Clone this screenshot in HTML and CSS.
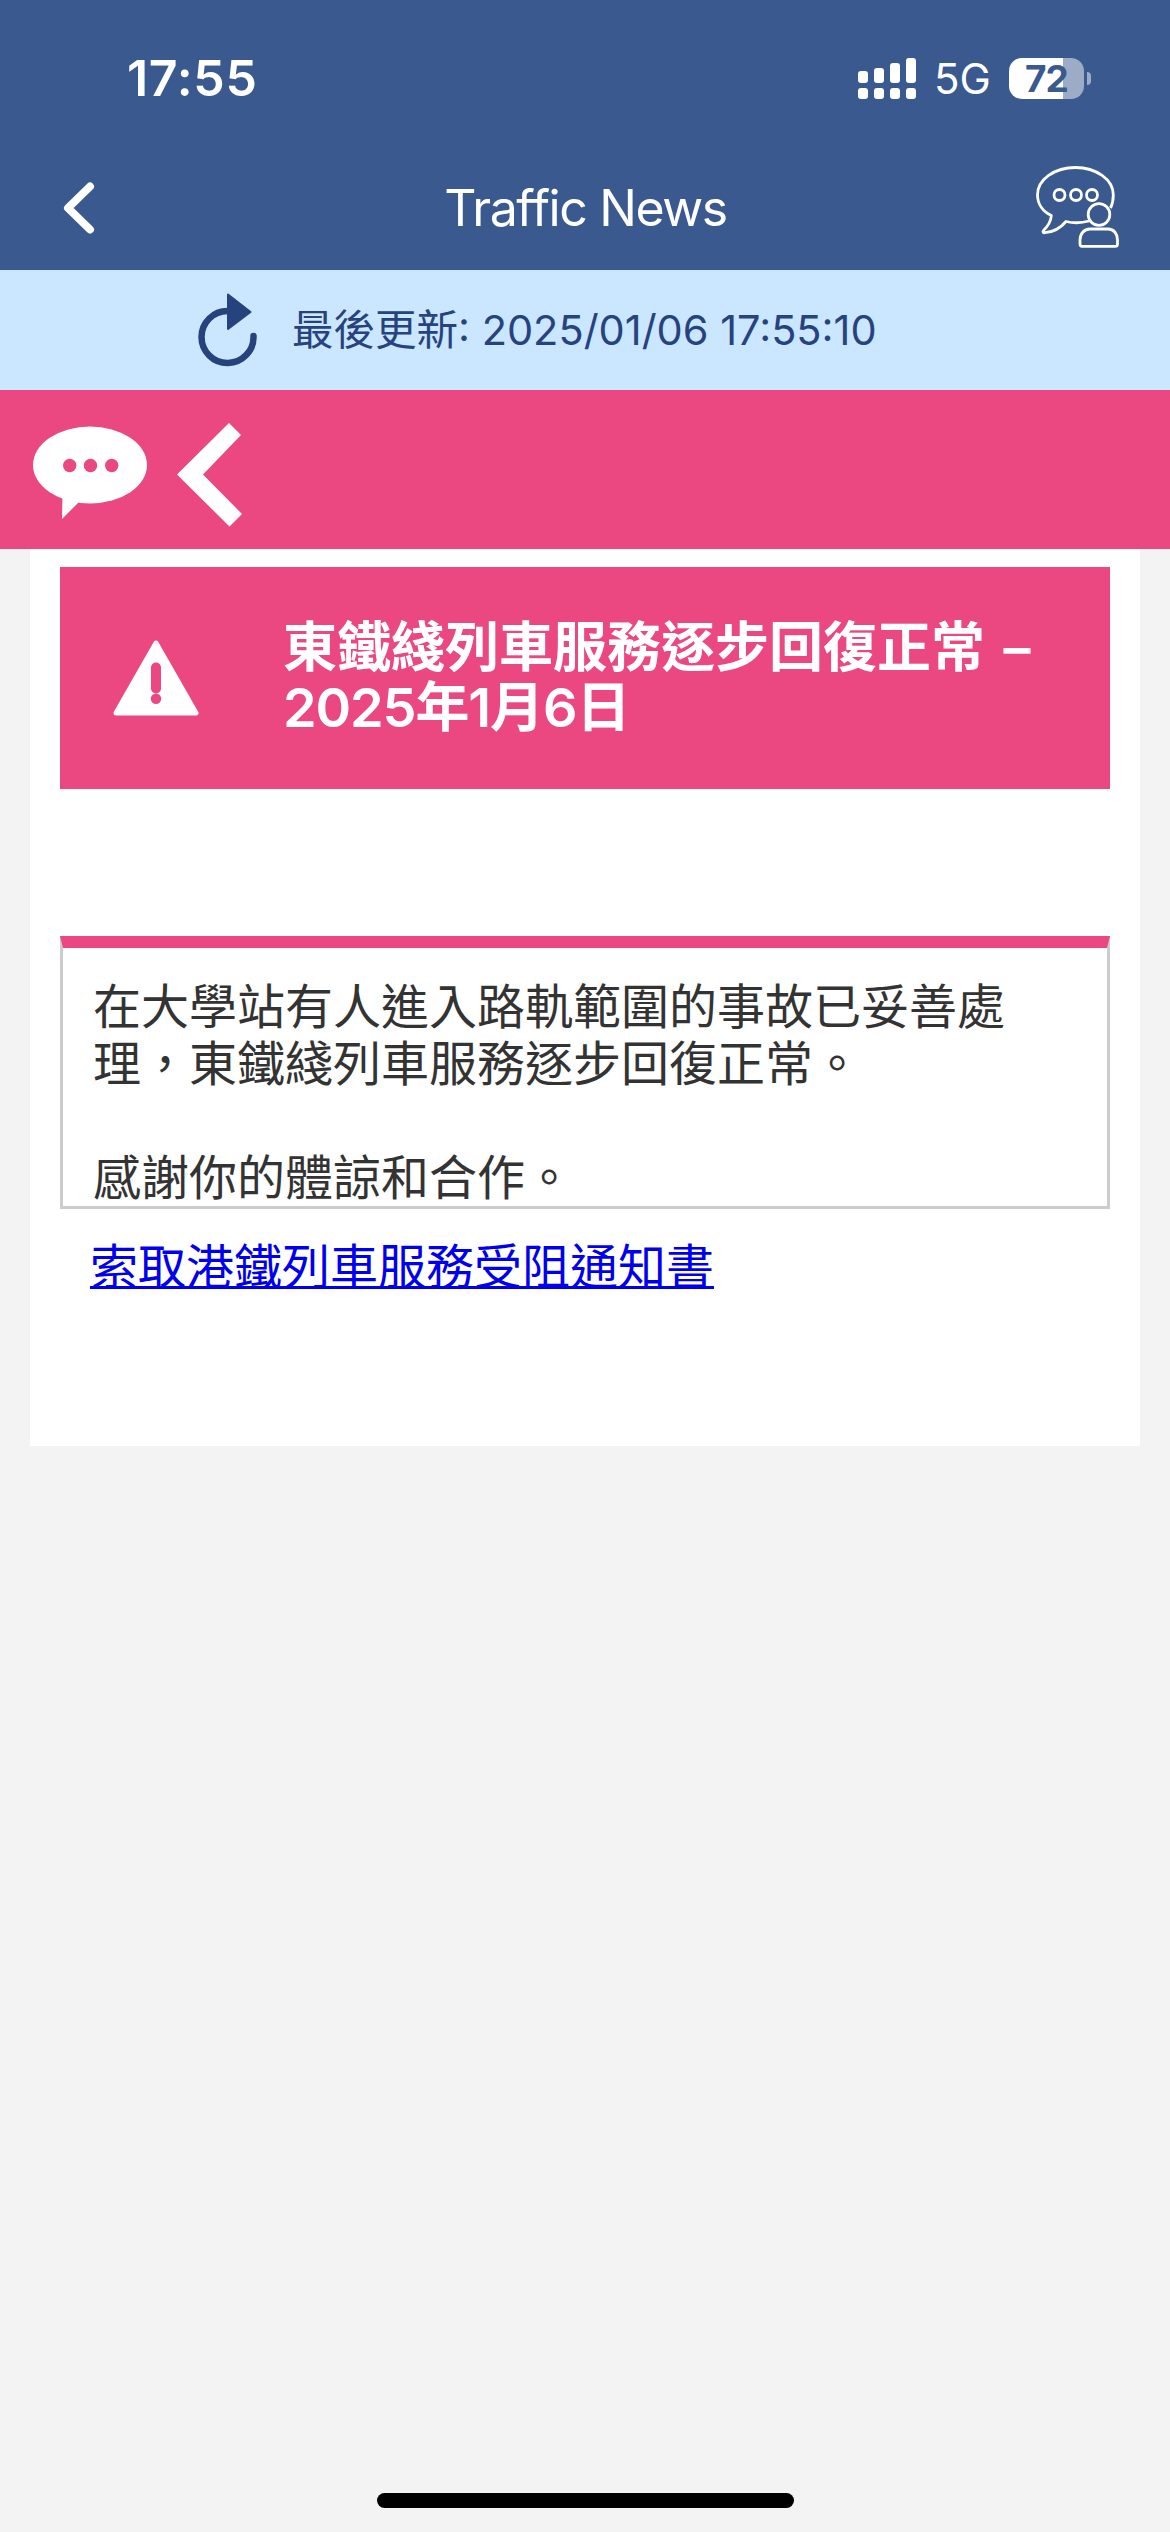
FILE: index.html
```html
<!DOCTYPE html>
<html lang="zh-Hant">
<head>
    <meta charset="utf-8">
    <title>Traffic News</title>
    <meta name="viewport" content="width=device-width, initial-scale=1.0">
    <link rel="stylesheet" href="styles.css">
</head>
<body>
    <header class="header">
        <div class="status-bar">
            <div class="time">17:55</div>
            <div class="status-icons">
                <svg class="signal" viewBox="0 0 58 41" fill="#fff">
                    <rect x="0" y="13" width="10" height="12" rx="3"/>
                    <rect x="16" y="10" width="10" height="15" rx="3"/>
                    <rect x="32" y="5" width="10" height="20" rx="3"/>
                    <rect x="48" y="0" width="10" height="25" rx="3"/>
                    <rect x="0" y="30" width="10" height="11" rx="3"/>
                    <rect x="16" y="30" width="10" height="11" rx="3"/>
                    <rect x="32" y="30" width="10" height="11" rx="3"/>
                    <rect x="48" y="30" width="10" height="11" rx="3"/>
                </svg>
                <span class="network">5G</span>
                <div class="battery"><span class="battery-text">72</span></div>
                <div class="battery-tip"></div>
            </div>
        </div>
        <div class="nav-bar">
            <svg class="back" viewBox="0 0 32 54" fill="none" stroke="#fff" stroke-width="8" stroke-linecap="round" stroke-linejoin="round">
                <path d="M27 5.500L5 27L27 48.500"/>
            </svg>
            <h1 class="title">Traffic News</h1>
            <svg class="chat" viewBox="0 0 84 84" fill="none" stroke="#fff" stroke-width="2.800" stroke-linejoin="round">
                <path d="M75.500 44C77.500 40 78.300 35.500 78.300 31C78.300 15.500 61 3.500 40.500 3.500C19.500 3.500 2.500 15.500 2.500 31C2.500 40 8 47.500 16.300 51.500C16 57.500 12.500 62.500 8.500 66.500C7.300 68 8.500 69 10 68.700C18 68 26 63.500 31 57.500C38.500 59.300 47 59 54 57"/>
                <circle cx="24.500" cy="31" r="5.500"/>
                <circle cx="41" cy="31" r="5.500"/>
                <circle cx="57" cy="31" r="5.500"/>
                <circle cx="64" cy="50.500" r="10.800"/>
                <path d="M55 65H73C79 65 82.500 70 82.500 76V80Q82.500 82.300 80.500 82.300H47Q45 82.300 45 80V76C45 70 49 65 55 65Z"/>
            </svg>
        </div>
    </header>

    <div class="update-bar">
        <svg class="refresh" viewBox="0 0 60 76">
            <path d="M30 18A26 26 0 1 0 55.500 43" fill="none" stroke="#27437e" stroke-width="6.500" stroke-linecap="round"/>
            <path d="M30 1.500L52.500 19L30 36Z" fill="#27437e" stroke="#27437e" stroke-width="2" stroke-linejoin="round"/>
        </svg>
        <span class="update-text">最後更新: 2025/01/06 17:55:10</span>
    </div>

    <div class="pink-bar">
        <svg class="bubble" viewBox="0 0 114 94">
            <ellipse cx="57" cy="39" rx="57" ry="38.500" fill="#fff"/>
            <path d="M29.500 68L29 93L46 76Z" fill="#fff"/>
            <circle cx="36.700" cy="39.500" r="6.700" fill="#eb4781"/>
            <circle cx="57.500" cy="39.500" r="6.700" fill="#eb4781"/>
            <circle cx="78.700" cy="39.500" r="6.700" fill="#eb4781"/>
        </svg>
        <svg class="prev" viewBox="0 0 65 104">
            <path d="M0 51.500L52 0L64 12L26 51.500L65 91L52.500 103.500Z" fill="#fff"/>
        </svg>
    </div>

    <main class="panel">
        <div class="alert">
            <svg class="warning" viewBox="0 0 86 76">
                <path d="M43 3L83 73H3Z" fill="#fff" stroke="#fff" stroke-width="5" stroke-linejoin="round"/>
                <rect x="38" y="22.500" width="10" height="31" rx="5" fill="#eb4781"/>
                <circle cx="43" cy="58.800" r="5.200" fill="#eb4781"/>
            </svg>
            <h2 class="alert-title">東鐵綫列車服務逐步回復正常 –<br><span class="alert-date">2025年1月6日</span></h2>
        </div>

        <div class="message">
            在大學站有人進入路軌範圍的事故已妥善處理，東鐵綫列車服務逐步回復正常。<br><br>
            感謝你的體諒和合作。
        </div>
        <a class="link" href="#">索取港鐵列車服務受阻通知書</a>
    </main>

    <div class="home-indicator"></div>
</body>
</html>
```
FILE: styles.css
```css
* {
    box-sizing: border-box;
}

body {
    background-color: #f3f3f3;
    display: flex;
    flex-direction: column;
    min-height: 2532px;
    margin: 0;
    font-family: Inter, "Noto Sans CJK TC", sans-serif;
}

svg {
    display: block;
    flex-shrink: 0;
}

.header {
    height: 270px;
    background-color: #39598f;
    color: white;
}

.status-bar {
    display: flex;
    justify-content: space-between;
    height: 146px;
    padding: 48px 79px 0 127px;
}

.time {
    font-size: 50px;
    font-weight: 600;
    line-height: 60px;
    letter-spacing: 0.7px;
}

.status-icons {
    display: flex;
    align-items: center;
    height: 60px;
}

.signal {
    width: 58px;
    height: 41px;
}

.network {
    width: 59px;
    margin: 2px 16px 0 18px;
    font-size: 42px;
    line-height: 50px;
}

.battery {
    width: 75px;
    height: 41px;
    border-radius: 13px;
    background: linear-gradient(to right, white 54px, #9cacc7 54px);
    color: #39598f;
    text-align: center;
}

.battery-text {
    font-size: 37px;
    font-weight: 700;
    line-height: 41px;
    letter-spacing: -1px;
}

.battery-tip {
    width: 4px;
    height: 13px;
    margin-left: 3px;
    border-radius: 0 4px 4px 0;
    background-color: #9cacc7;
}

.nav-bar {
    display: flex;
    justify-content: space-between;
    align-items: center;
    height: 124px;
    padding: 0 51px 0 63px;
}

.back {
    width: 32px;
    height: 54px;
    margin-right: 41px;
}

.title {
    margin: 0;
    font-size: 50px;
    font-weight: 400;
    line-height: 60px;
    letter-spacing: -1.4px;
}

.chat {
    width: 84px;
    height: 84px;
    margin-bottom: 4px;
}

.update-bar {
    display: flex;
    align-items: center;
    height: 120px;
    padding-left: 198px;
    background-color: #cbe6ff;
    color: #27437e;
}

.refresh {
    width: 60px;
    height: 76px;
    margin: 2px 34px 0 0;
}

.update-text {
    font-size: 41.500px;
    line-height: 60px;
    white-space: nowrap;
}

.pink-bar {
    display: flex;
    align-items: flex-start;
    gap: 30px;
    height: 159px;
    padding: 33px;
    background-color: #eb4781;
}

.bubble {
    width: 114px;
    height: 94px;
    margin-top: 3px;
}

.prev {
    width: 65px;
    height: 104px;
}

.panel {
    height: 897px;
    margin: 0 30px;
    padding: 18px 30px 0;
    background-color: white;
}

.alert {
    display: flex;
    align-items: center;
    height: 222px;
    padding-left: 53px;
    background-color: #eb4781;
    color: white;
}

.warning {
    width: 86px;
    height: 76px;
    margin-right: 84px;
}

.alert-title {
    margin: 0;
    font-size: 54px;
    font-weight: 600;
    line-height: 60px;
    word-spacing: 5px;
    white-space: nowrap;
}

.alert-date {
    letter-spacing: -1.1px;
}

.message {
    height: 273px;
    margin-top: 147px;
    padding: 30px 30px 0;
    border: 3px solid #ccc;
    border-top: 12px solid #eb4781;
    font-size: 48px;
    line-height: 57px;
    color: #333;
}

.link {
    display: inline-block;
    margin: 29px 0 0 30px;
    font-size: 48px;
    line-height: 57px;
    color: #0000ee;
    text-decoration-thickness: 3px;
    text-underline-offset: 2px;
    text-decoration-skip-ink: none;
}

.home-indicator {
    width: 417px;
    height: 15px;
    margin: auto auto 24px;
    border-radius: 8px;
    background-color: black;
}
```
